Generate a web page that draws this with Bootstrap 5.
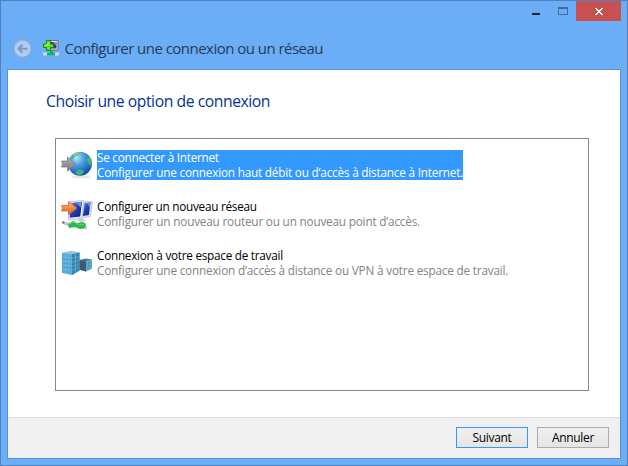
<!DOCTYPE html>
<html lang="fr">
<head>
<meta charset="utf-8">
<meta name="viewport" content="width=device-width, initial-scale=1">
<title>Configurer une connexion ou un réseau</title>
<link href="https://cdn.jsdelivr.net/npm/bootstrap@5.3.0/dist/css/bootstrap.min.css" rel="stylesheet">
<style>
body{font-family:"Open Sans","Noto Sans",sans-serif;font-size:11.75px;line-height:15px;color:#000;width:628px;height:466px;overflow:hidden}
.win{width:628px;height:466px;background:#6badf6;border:1px solid #4f82bd}
.caption-bar{height:20px;padding-right:6px}
.caption-bar svg{display:block}
.title-row{height:48px;padding:6px 0 0 12px}
.title-text{font-size:15px;letter-spacing:-.53px;line-height:20px;color:#263b57;margin-left:5.500px}
.pane{margin:0 6px 6px;height:390px;border:1px solid #5692d8;background:#fff}
.heading{font-size:15.7px;letter-spacing:-.43px;line-height:20px;color:#003399;margin:21px 0 0 38px;font-weight:400}
.options{margin:27px 31px 0 47px;height:253px;border:1px solid #828790;padding:11px 0 0 5px}
.option{height:49px}
.option svg{flex:none;width:32px;height:32px;margin-right:4px;display:block}
.lbl{height:30px;white-space:nowrap;letter-spacing:-.26px}
.lbl .desc{color:#838383;letter-spacing:-.19px}
.chosen .lbl{background:#3399ff;color:#fff}
.chosen .lbl .desc{color:#fff;letter-spacing:-.2px}
.foot{height:41px;border-top:1px solid #dfdfdf;background:#f0f0f0;padding:9px 11px 0 0;gap:9px}
.cmd{width:72px;height:21px;padding:0;border:1px solid #acacac;border-radius:0;background:linear-gradient(#f0f0f0,#e5e5e5);font-size:12px;letter-spacing:-.3px;line-height:18px;color:#000}
.cmd.main{border-color:#3399ff}
</style>
<script src="https://cdn.jsdelivr.net/npm/bootstrap@5.3.0/dist/js/bootstrap.bundle.min.js"></script>
</head>
<body>
<div class="win d-flex flex-column">
  <div class="caption-bar d-flex justify-content-end">
    <svg width="95" height="20" viewBox="0 0 95 20" shape-rendering="crispEdges">
      <path fill="#c75050" d="M50 0h45v20H50z"/>
      <path fill="#1b2430" d="M6 12h8v2H6z"/>
      <path fill="none" stroke="#456b9b" d="M32.500 6.500h9v7h-9zM32 7.500h10"/>
      <path fill="#fff" d="M69 7h2v1h1v1h2V8h1V7h2v1h-1v1h-1v1h-1v1h1v1h1v1h1v1h-2v-1h-1v-1h-2v1h-1v1h-2v-1h1v-1h1v-1h1v-1h-1V9h-1V8h-1z"/>
    </svg>
  </div>
  <div class="title-row d-flex align-items-center">
    <svg width="20" height="20" viewBox="0 0 20 20"><circle cx="9.500" cy="10.600" r="8.800" fill="#a9cdf6" stroke="#8ba9cb" stroke-width="1.200"/><path d="M14.500 10.800H6M9.500 6.800l-4 4 4 4" fill="none" stroke="#8199b6" stroke-width="2"/></svg>
    <svg width="16" height="16" viewBox="0 0 16 16" style="margin-left:10px"><path d="M5.500.5h9.500v9.500H5.500z" fill="#e5e5dc" stroke="#71716a"/><path d="M7 2h6.500v6.500H7z" fill="#2834a5"/><path d="M10 2h3.500v4z" fill="#8199ef"/><path d="M0 12.500h16v3H0z" fill="#d6dbe0"/><path d="M7 10.500h3v2h2v3H4v-3h3z" fill="#12ae78"/><path d="M3.500.5h4V4h3v3.500h-3V10.500h-4V7.500H.5V4h3z" fill="#6bdc27" stroke="#168819"/><path d="M5 2v3H2" fill="none" stroke="#b9fa82"/></svg>
    <span class="title-text">Configurer une connexion ou un réseau</span>
  </div>
  <main class="pane d-flex flex-column">
    <h1 class="heading">Choisir une option de connexion</h1>
    <div class="options">
      <div class="option chosen d-flex">
        <svg viewBox="0 0 32 32"><defs><radialGradient id="gl" cx=".35" cy=".25" r=".8"><stop offset="0" stop-color="#b5e3fa"/><stop offset=".4" stop-color="#4a9fdf"/><stop offset="1" stop-color="#0b4b9f"/></radialGradient><linearGradient id="ar" x2="0" y2="1"><stop stop-color="#b1b1b9"/><stop offset="1" stop-color="#777783"/></linearGradient></defs><ellipse cx="20" cy="27" rx="10" ry="1.500" fill="#e3e5e9"/><circle cx="19" cy="13.700" r="12" fill="url(#gl)"/><path d="M11 5.500c2-3 6-4 9-3l-3 2.500-3 1-2 3-3 1zM28 6c2 2 3.500 5 2.800 8l-1.500 2-2-3-1.500-3zM15 21l4-1.500 4 1.500-1 2.500-3.500 2-4-2z" fill="#48b080"/><path d="M12 4.500c2-2 5-2.500 7-2l-3 2-3 1z" fill="#8fd3a5"/><path d="M.5 11h6V7l8 7-8 7v-4h-6l1-3z" fill="url(#ar)" stroke="#7d7d8a" stroke-width=".8"/></svg>
        <div class="lbl"><div>Se connecter à Internet</div><div class="desc">Configurer une connexion haut débit ou d’accès à distance à Internet.</div></div>
      </div>
      <div class="option d-flex">
        <svg viewBox="0 0 32 32"><defs><linearGradient id="sc" x2="1" y2="1"><stop stop-color="#7694ee"/><stop offset=".45" stop-color="#2342b8"/><stop offset="1" stop-color="#07157d"/></linearGradient><linearGradient id="og" x2="0" y2="1"><stop stop-color="#ffb778"/><stop offset="1" stop-color="#e4590c"/></linearGradient></defs><path d="M19 3l12.500-.5-2 15-10 1.500z" fill="#dbe0ec" stroke="#afb4c2" stroke-width=".6"/><path d="M23.500 4l6-.5-1.700 12.500-6 1z" fill="url(#sc)"/><path d="M8 2.500l15-1-2 18-13.500 1.500z" fill="#e8ebf3" stroke="#afb4c2" stroke-width=".6"/><path d="M10 4l11-1.200-1.800 14.700-10.500 1.200z" fill="url(#sc)"/><path d="M15 3.500l5.500-.7-.8 6zM25.500 4l4-.5-.6 5z" fill="#718ce1"/><path d="M16 20l5-1 4 3-6 1z" fill="#c6cad4"/><path d="M2 23.500l7 2.500M22 28l4 1" stroke="#c2c6cf" stroke-width="3"/><circle cx="2.200" cy="23.500" r="1.200" fill="#777"/><path d="M7 25l5-3 4 2 6-1 3 2-1 4-5 1-5-2-6 1z" fill="#28b852"/><path d="M8 25l5-2 5 3 5-1" fill="none" stroke="#68d568" stroke-width="1"/><path d="M.5 6.500h7v-4L16 9l-8.500 7v-4h-7L1.500 9z" fill="url(#og)" stroke="#c86b3a" stroke-width=".8"/></svg>
        <div class="lbl"><div>Configurer un nouveau réseau</div><div class="desc">Configurer un nouveau routeur ou un nouveau point d’accès.</div></div>
      </div>
      <div class="option d-flex">
        <svg viewBox="0 0 32 32"><path d="M18 12l7-1.500 5.800 1v9l-5.800 3-7-2z" fill="#477f9b"/><path d="M18 12l7 1v10.500l-7-2z" fill="#3d5a6e"/><path d="M25 13l5.800-1.500v9l-5.800 3z" fill="#62afd0"/><path d="M1 5l9-2 8.500 1.500v18l-7.500 4.500-10-2z" fill="#58abd8"/><path d="M11 6l7.500-1.500v18L11 27z" fill="#3585ad"/><path d="M1 5l9-2 8.500 1.500L11 6z" fill="#8fcbe8"/><path d="M1 9l10 1.200 7-1.700M1 13l10 1.200 7-2.200M1 17l10 1.500 7-2.700M1 21l10 1.500 7-3M4.500 5.500v20M7.800 6v20M14.500 5.500v19" fill="none" stroke="#7cc0e3" stroke-width=".5"/><path d="M2 11l8 1M2 15l8 1M2 19l8 1" stroke="#3c91bd" stroke-width=".5"/><path d="M25 16l5-1.500M25 19.500l5-2M28 13v9" stroke="#3d87a8" stroke-width=".6"/></svg>
        <div class="lbl"><div>Connexion à votre espace de travail</div><div class="desc">Configurer une connexion d’accès à distance ou VPN à votre espace de travail.</div></div>
      </div>
    </div>
    <footer class="foot d-flex justify-content-end mt-auto">
      <button type="button" class="btn cmd main">Suivant</button>
      <button type="button" class="btn cmd">Annuler</button>
    </footer>
  </main>
</div>
</body>
</html>
